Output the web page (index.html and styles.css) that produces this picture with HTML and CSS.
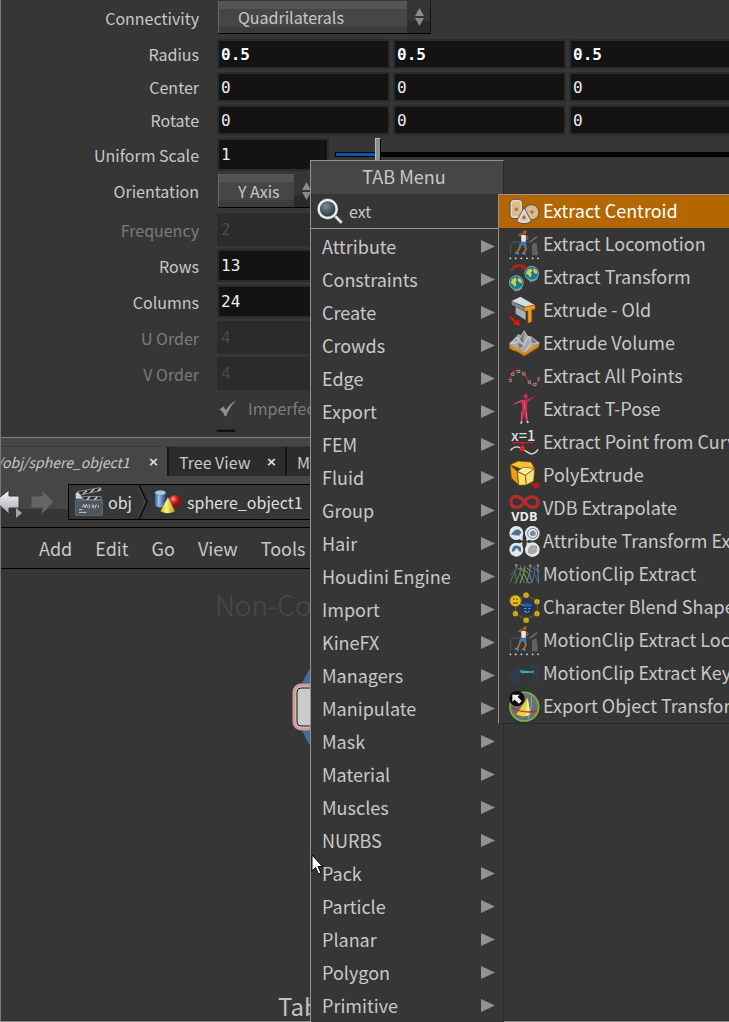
FILE: index.html
```html
<!DOCTYPE html>
<html lang="en">
<head>
<meta charset="utf-8">
<title>sphere_object1</title>
<link rel="stylesheet" href="styles.css">
</head>
<body>
<svg class="defs" aria-hidden="true">
  <defs>
    <linearGradient id="lg-blue" x1="0" x2="1"><stop offset="0" stop-color="#2c5a9c"/><stop offset=".35" stop-color="#9fc0ea"/><stop offset="1" stop-color="#1d3f74"/></linearGradient>
    <linearGradient id="lg-yellow" x1="0" x2="1"><stop offset="0" stop-color="#c9b32a"/><stop offset=".4" stop-color="#fff27a"/><stop offset="1" stop-color="#b8981a"/></linearGradient>
    <radialGradient id="rg-red" cx=".35" cy=".3"><stop offset="0" stop-color="#ff9a8a"/><stop offset=".5" stop-color="#d9302a"/><stop offset="1" stop-color="#8a1210"/></radialGradient>
    <radialGradient id="rg-glass" cx=".4" cy=".35"><stop offset="0" stop-color="#7b8d98"/><stop offset="1" stop-color="#34444e"/></radialGradient>
    <linearGradient id="lg-arrow" x1="0" x2="0" y1="0" y2="1"><stop offset="0" stop-color="#f4f4f4"/><stop offset="1" stop-color="#a9adb0"/></linearGradient>
    <symbol id="i-run" viewBox="0 0 93 93">
      <path d="M5 76V50q1-11 12-11h48" fill="none" stroke="#55585b" stroke-width="3"/>
      <path d="M69 79V48l5-6h9l4 37z" fill="#606366"/>
      <path d="M64 38l20-15" stroke="#74787c" stroke-width="4"/>
      <path d="M42 8l5-5 6 2-1 8-6 4-5-3z" fill="#a85f18"/>
      <path d="M38 22l-8-4 10-6M52 20l5 6-6 7" fill="none" stroke="#a85f18" stroke-width="4"/>
      <path d="M37 17l14 2-1 20-13-1z" fill="#e4e8ee"/>
      <path d="M36 46l-5 12-7 15M46 47l5 12-7 15" fill="none" stroke="#b0681e" stroke-width="6"/>
      <path d="M37 38h13l3 14-6 2-7-6-6 5-5-3z" fill="#3c78be"/>
      <path d="M18 70l11 6M39 72l11 4" stroke="#4d8ddb" stroke-width="5"/>
      <g fill="#e8e8e8"><circle cx="4" cy="88" r="2.6"/><circle cx="20" cy="88" r="2.6"/><circle cx="37" cy="88" r="2.6"/><circle cx="54" cy="88" r="2.6"/><circle cx="71" cy="88" r="2.6"/><circle cx="87" cy="88" r="2.6"/></g>
    </symbol>
    <symbol id="i-globe" viewBox="0 0 42 46">
      <path d="M8 34q10 10 22 0l6-6v8q-8 9-20 8z" fill="#85898c"/>
      <circle cx="20" cy="20" r="19" fill="#177b91" stroke="#a9bfc4" stroke-width="2"/>
      <path d="M8 12l9-6 5 7-4 5 2 6-4 9-5-8-6-4zM25 6l9 6 2 10-8-2-4-6z" fill="#d5cc58"/>
    </symbol>
    <symbol id="i-face" viewBox="0 0 16 16"><circle cx="8" cy="8" r="7" fill="#e3bc24" stroke="#8c7114"/><path d="M5 6h2M9 6h2M5 10q3 2 6 0" stroke="#6c5510" stroke-width="1.5" fill="none"/></symbol>
  </defs>
</svg>

<main class="app">
  <section class="params" aria-label="Parameters">
    <div class="group">
      <div class="row">
        <label class="label" for="conn">Connectivity</label>
        <div class="combo combo-wide">
          <select id="conn"><option>Quadrilaterals</option></select>
          <svg class="spin" viewBox="0 0 9 18"><path d="M4.500 0L9 8H0zM0 10h9l-4.500 8z"/></svg>
        </div>
      </div>
    </div>
    <div class="group">
      <div class="row">
        <label class="label" for="rx">Radius</label>
        <div class="triple strong"><input class="field" id="rx" value="0.5"><input class="field" aria-label="Radius y" value="0.5"><input class="field" aria-label="Radius z" value="0.5"></div>
      </div>
      <div class="row">
        <label class="label" for="cx">Center</label>
        <div class="triple"><input class="field" id="cx" value="0"><input class="field" aria-label="Center y" value="0"><input class="field" aria-label="Center z" value="0"></div>
      </div>
      <div class="row">
        <label class="label" for="rot">Rotate</label>
        <div class="triple"><input class="field" id="rot" value="0"><input class="field" aria-label="Rotate y" value="0"><input class="field" aria-label="Rotate z" value="0"></div>
      </div>
      <div class="row">
        <label class="label" for="scale">Uniform Scale</label>
        <input class="field tall short" id="scale" value="1">
        <input class="slider" type="range" min="0" max="10" value="1" aria-label="Uniform Scale slider">
      </div>
      <div class="row">
        <label class="label" for="orient">Orientation</label>
        <div class="combo">
          <select id="orient"><option>Y Axis</option></select>
          <svg class="spin" viewBox="0 0 9 18"><path d="M4.500 0L9 8H0zM0 10h9l-4.500 8z"/></svg>
        </div>
      </div>
    </div>
    <div class="group">
      <div class="row off"><label class="label" for="freq">Frequency</label><input class="field tall short" id="freq" value="2" disabled></div>
      <div class="row"><label class="label" for="rows">Rows</label><input class="field tall short" id="rows" value="13"></div>
      <div class="row"><label class="label" for="cols">Columns</label><input class="field tall short" id="cols" value="24"></div>
      <div class="row off"><label class="label" for="uo">U Order</label><input class="field tall short" id="uo" value="4" disabled></div>
      <div class="row off"><label class="label" for="vo">V Order</label><input class="field tall short" id="vo" value="4" disabled></div>
      <div class="row off check-row">
        <label class="check"><input type="checkbox" checked disabled>
          <svg viewBox="0 0 52 50"><path d="M1 27l13-8 7 11Q34 8 51 1 30 24 22 49h-4Q12 33 1 27z"/></svg>
          Imperfect</label>
      </div>
    </div>
    <div class="next-box"></div>
  </section>

  <section class="network" aria-label="Network editor">
    <div class="tabs">
      <div class="tab active"><span>/obj/sphere_object1</span><button aria-label="Close">×</button></div>
      <div class="tab"><span>Tree View</span><button aria-label="Close">×</button></div>
      <div class="tab"><span>Material Palette</span></div>
    </div>
    <div class="pathbar">
      <button class="nav" aria-label="Back"><svg viewBox="0 0 22 26"><path d="M-8 12L6 1v6h10v12H6v6z" fill="url(#lg-arrow)" stroke="#2e3940" stroke-width="1"/><path d="M13 19v10l6-5z" fill="#a5a5a5"/></svg></button>
      <button class="nav" aria-label="Forward"><svg viewBox="0 0 26 26"><path d="M1 7h11V1l12 12-12 12v-6H1z" fill="#646464" stroke="#3c474e"/></svg></button>
      <div class="path">
        <a href="#obj">
          <svg class="path-icon" viewBox="0 0 84 90"><path d="M2 39h80v46H2z" fill="#4d565c" stroke="#788086" stroke-width="2"/><path d="M2 18l8-3 14 20H2z" fill="#c9d2d8"/><path d="M8 14L76 2l3 8L16 24zM24 29h54v9H22z" fill="#202326" stroke="#b8bec2" stroke-width="2"/><path d="M24 20l12-9M46 16l12-9M68 12l9-8M36 38l9-9M58 38l9-9" stroke="#cfd4d8" stroke-width="4"/><path d="M12 68h10M12 76h22M22 62l4-10 4 10 4-10 4 10M43 52v12M50 58h8M54 52v12M64 52l-4 12M70 54v8" stroke="#c4cacd" stroke-width="3" fill="none"/></svg>
          obj</a>
        <svg class="sep" viewBox="0 0 10 34"><path d="M1 0l8 17-8 17" fill="none" stroke="#0c0c0c" stroke-width="1.500"/><path d="M-1 0l8 17-8 17" fill="none" stroke="#4c4c4c"/></svg>
        <a href="#sphere">
          <svg class="path-icon" viewBox="0 0 88 78"><path d="M3 9v42q17 11 34 0V9z" fill="url(#lg-blue)"/><ellipse cx="20" cy="10" rx="17" ry="8" fill="#a9c7ee" stroke="#3e69a3"/><circle cx="66" cy="37" r="20" fill="url(#rg-red)"/><path d="M44 24L20 68q24 12 46 0z" fill="url(#lg-yellow)"/></svg>
          sphere_object1</a>
      </div>
    </div>
    <nav class="menubar"><button>Add</button><button>Edit</button><button>Go</button><button>View</button><button>Tools</button></nav>
    <div class="canvas">
      <p class="watermark">Non-Commercial</p>
      <svg class="node" viewBox="0 0 146 136"><circle cx="73" cy="68" r="67" fill="#4a6a9c"/><rect x="2" y="46" width="142" height="44" rx="7" fill="#ccc" stroke="#d09a96" stroke-width="3"/><rect x="5" y="49" width="136" height="38" rx="4" fill="#cbcbcb" stroke="#161616"/></svg>
      <p class="hint">Tab menu</p>
    </div>
  </section>
</main>

<div class="tabmenu" role="menu">
  <h1>TAB Menu</h1>
  <label class="search">
    <svg viewBox="0 0 78 78"><path d="M50 50l24 25" stroke="#8b9196" stroke-width="10"/><path d="M50 50l24 24" stroke="#f0f0f0" stroke-width="6"/><circle cx="32" cy="33" r="27" fill="url(#rg-glass)" stroke="#555c60" stroke-width="10"/><circle cx="32" cy="33" r="27" fill="none" stroke="#eee" stroke-width="7"/></svg>
    <input value="ext" aria-label="Search tools">
  </label>
  <div class="items">
    <button>Attribute</button><button>Constraints</button><button>Create</button><button>Crowds</button><button>Edge</button><button>Export</button><button>FEM</button><button>Fluid</button><button>Group</button><button>Hair</button><button>Houdini Engine</button><button>Import</button><button>KineFX</button><button>Managers</button><button>Manipulate</button><button>Mask</button><button>Material</button><button>Muscles</button><button>NURBS</button><button>Pack</button><button>Particle</button><button>Planar</button><button>Polygon</button><button>Primitive</button>
  </div>
</div>

<div class="submenu" role="menu">
  <button class="selected"><svg viewBox="0 0 93 93"><g stroke="#5b5148" stroke-width="3"><rect x="3" y="10" width="38" height="58" rx="12" fill="#dcd7cc"/><rect x="9" y="17" width="26" height="44" rx="6" fill="#e1b883" stroke="none"/><circle cx="67" cy="49" r="23" fill="#cdb79d"/><circle cx="67" cy="49" r="17" fill="#e2b885" stroke="none"/><path d="M45 34L23 76q22 14 44 0z" fill="#e4dccf"/><path d="M45 48L33 72q12 7 24 0z" fill="#e2bd8d" stroke="none"/></g><g fill="#8c949b" stroke="#5c6064" stroke-width="2"><circle cx="22" cy="40" r="4"/><circle cx="69" cy="48" r="4"/><circle cx="45" cy="64" r="4"/></g></svg>Extract Centroid</button>
  <button><svg viewBox="0 0 93 93"><use href="#i-run"/></svg>Extract Locomotion</button>
  <button><svg viewBox="0 0 93 93"><use href="#i-globe" x="0" y="38" width="46" height="54"/><use href="#i-globe" x="46" y="10" width="46" height="54"/><path d="M6 26Q22 2 44 14" fill="none" stroke="#b52022" stroke-width="7"/><path d="M42 4l12 16-20 4z" fill="#b52022"/></svg>Extract Transform</button>
  <button><svg viewBox="0 0 93 93"><path d="M8 18L34 5l43 25-28 5z" fill="#d9dde0"/><path d="M8 18l40 20v11L8 29z" fill="#7f868c"/><path d="M20 36l30 15v24L20 56z" fill="#a8afb5"/><path d="M47 36l31-6v12l-10 2v36l-11 4V47l-10 2z" fill="#f49a20" stroke="#a86508" stroke-width="2"/><path d="M4 62l20 17 5-8 5 22-23-5 6-4L2 69z" fill="#d11c10"/></svg>Extrude - Old</button>
  <button><svg viewBox="0 0 93 93"><path d="M1 45v15q6 8 20 10l10 5 15 9 15-9 28-17 3-14z" fill="#d98a1c" stroke="#835010" stroke-width="2"/><path d="M1 46l20-18 6-10 9 4 10-14 12 16 9 1 25 20-27 15-18 14-15-10-12-3z" fill="#a6a8aa"/><path d="M46 8L31 34 21 28 6 46l20-2 5-10 13 18L58 24l9 20 22 1M44 52L32 64M67 44L48 72" fill="none" stroke="#d8dadb" stroke-width="3"/><path d="M46 10l-4 36-11-12zM67 28l0 16 16 1zM26 44l6 20 12-12z" fill="#77797c"/></svg>Extrude Volume</button>
  <button><svg viewBox="0 0 93 93"><path d="M3 59C7 20 30 25 45 39S56 76 78 70q8-2 12-16" fill="none" stroke="#c32222" stroke-width="4"/><g fill="#222" stroke="#c9c9c9" stroke-width="2"><path d="M0 55h7v7H0zM8 36h7v7H8zM25 28h7v7h-7zM41 35h7v7h-7zM58 60h7v7h-7zM74 67h7v7h-7zM87 50h7v7h-7z"/></g></svg>Extract All Points</button>
  <button><svg viewBox="0 0 93 93"><path d="M7 32l34-14 6 0 35-11-27 16-1 28 3 31-6 1-6-28-4 29-7-1 5-32-1-26z" fill="#c72c50"/><ellipse cx="50" cy="7" rx="6" ry="8" fill="#b3354d"/><path d="M45 22l3 26M39 52l-1 24M52 54l2 22M16 30l26-12" stroke="#ed7890" stroke-width="2"/><path d="M38 82l-2 7M54 81l4 6" stroke="#e3c8c8" stroke-width="5"/></svg>Extract T-Pose</button>
  <button><svg viewBox="0 0 93 93"><text class="glyph-x1" x="6" y="41">x=1</text><path d="M4 70Q20 52 39 65T66 81q14-1 21-14" fill="none" stroke="#ddd" stroke-width="4"/><path d="M10 47h62M40 47v18" stroke="#d02020" stroke-width="4"/><circle cx="40" cy="65" r="8" fill="#e02424"/></svg>Extract Point from Curve</button>
  <button><svg viewBox="0 0 93 93"><g stroke="#5e4308" stroke-width="2"><path d="M3 14L28 3l38 3 11 19-34 5z" fill="#ffc032"/><path d="M3 14l22 20 4 42L7 54z" fill="#f09c12"/><path d="M25 34l25 12 2 29-23 1z" fill="#ffdf62"/><path d="M25 34l18-12 34 3-27 21z" fill="#fff0a0"/><path d="M50 46l27-21-3 38-22 12z" fill="#ffe07c"/></g><path d="M68 66l13 6 5-8 7 17-21 5 5-7-11-5z" fill="#c51a12"/></svg>PolyExtrude</button>
  <button><svg viewBox="0 0 93 93"><path d="M46 27C36 45 8 51 6 28S30 5 46 26s39 23 41 2S58 6 46 27z" fill="none" stroke="#b62a2a" stroke-width="10"/><text class="glyph-vdb" x="7" y="85">VDB</text></svg>VDB Extrapolate</button>
  <button><svg viewBox="0 0 93 93"><g fill="#e6e7e8"><circle cx="22" cy="21" r="21"/><circle cx="70" cy="22" r="22"/><circle cx="22" cy="71" r="21"/><circle cx="70" cy="71" r="22"/><path d="M26 36l15 9 0-14zM66 38l-14 8 0-16zM26 55l14-7v16zM66 55l-13-7v16z"/></g><path d="M6 26q10-18 24-15l8 8-8 10z" fill="#4479aa"/><circle cx="25" cy="18" r="7" fill="#626b72"/><circle cx="71" cy="22" r="15" fill="none" stroke="#4f83b6" stroke-width="3"/><path d="M63 19l8-6 9 5v10l-10 3-7-4z" fill="#888"/><path d="M8 77l4-15 10-4 13 5 2 14-14-3z" fill="#396f9f"/><path d="M15 75l8-10 8 10z" fill="#ddd"/><path d="M59 66l9-8 16 3-2 17-12 7-12-4z" fill="#a8a9a8" stroke="#77787a"/></svg>Attribute Transform Extract</button>
  <button><svg viewBox="0 0 93 93"><g fill="none" stroke-width="3"><path d="M22 20l-5 19-14 32M17 38l7 32-8 3M21 25l14 8M21 31L3 49" stroke="#5f6e78"/><path d="M35 20l-2 22-13 30M33 42l14 31M27 28l16 10" stroke="#5f8a48"/><path d="M48 20l-4 24-11 29M44 42l13 28 7 3M35 27l22 14" stroke="#72b04c"/><path d="M64 20l-3 22-8 30M61 42l8 30M52 26l19 14" stroke="#72868e"/><path d="M78 20l-2 23-7 29M76 43l12 29M69 25l19 12" stroke="#456b87"/><path d="M87 20v23l2 30M82 28l9 13" stroke="#5484a5"/></g><g fill="#77909c"><circle cx="22" cy="19" r="4"/><circle cx="64" cy="20" r="4"/><circle cx="87" cy="20" r="4"/></g></svg>MotionClip Extract</button>
  <button><svg viewBox="0 0 93 93"><path d="M20 30L52 8l33 20v36L52 84 20 65z" fill="none" stroke="#8f7a24" stroke-width="2"/><circle cx="54" cy="46" r="20" fill="#17366c"/><path d="M39 39q16-12 31 0l-3 5H41z" fill="#285ba8"/><path d="M46 50h6M58 50h6M46 58q9 6 16 0" stroke="#9cb7d6" stroke-width="3"/><path d="M26 32l18 8" stroke="#b4932a" stroke-width="3"/><use href="#i-face" x="0" y="7" width="39" height="39"/><use href="#i-face" x="42" y="0" width="19" height="19"/><use href="#i-face" x="75" y="20" width="18" height="18"/><use href="#i-face" x="75" y="56" width="18" height="18"/><use href="#i-face" x="42" y="75" width="19" height="19"/><use href="#i-face" x="10" y="56" width="18" height="18"/></svg>Character Blend Shapes</button>
  <button><svg viewBox="0 0 93 93"><use href="#i-run"/></svg>MotionClip Extract Locomotion</button>
  <button><svg viewBox="0 0 93 93"><g fill="none" stroke="#24455e" stroke-width="4"><path d="M2 54l14-10 18-13 8 9 22 2 18-4 9-12M34 40L17 53l-2 14 8 11M31 48l-5 24 9 7M76 42l-2 17-6 16M80 44l5 18-2 16M56 23l15 3 18-1M18 48L3 48"/></g><path d="M32 37l36 3 6-4v8l-38 2z" fill="#36a7bc"/></svg>MotionClip Extract Key Poses</button>
  <button><svg viewBox="0 0 93 93"><circle cx="46" cy="47" r="43" fill="#6c6f73" stroke="#74b93c" stroke-width="5"/><path d="M56 20L22 70q18 12 42 1z" fill="#e8cf38"/><path d="M56 20l-6 54q8 0 14-3z" fill="#fff09a"/><path d="M67 13q4 28-10 72" fill="none" stroke="#7aa4c0" stroke-width="3"/><path d="M8 51q40 18 76 9" fill="none" stroke="#c32a22" stroke-width="4"/><circle cx="24" cy="23" r="23" fill="#0c0c0c"/><path d="M10 11h22l-6 6 12 13-8 8-13-12-7 6z" fill="#ededed"/></svg>Export Object Transforms</button>
</div>

<svg class="cursor" viewBox="0 0 12 21"><path d="M1 1v16l3.500-3.500L7.500 20l2.500-1-3-6.500h4.500z" fill="#fff" stroke="#000"/></svg>
</body>
</html>
```
FILE: styles.css
```css
* { box-sizing: border-box; }
html, body { height: 100%; }
body {
  margin: 0;
  overflow: hidden;
  position: relative;
  background: #363636;
  color: #c8c8c8;
  font: 16px/24px "Noto Sans CJK SC", "Noto Sans", sans-serif;
}
button, input, select { font: inherit; color: inherit; border: 0; margin: 0; padding: 0; background: none; min-width: 0; }
button { cursor: default; white-space: nowrap; }
svg { display: block; flex: none; }
p, h1 { margin: 0; font-weight: 400; }
.defs { position: absolute; width: 0; height: 0; }

.app { display: flex; flex-direction: column; height: 100%; border-left: 1px solid #777; border-bottom: 1px solid #8a8a8a; }

/* parameters */
.params { display: flex; flex-direction: column; gap: 5px; padding-top: 1px; flex: none; overflow: hidden; }
.group { display: flex; flex-direction: column; gap: 3px; }
.row { display: flex; align-items: center; }
.label { width: 198px; margin-right: 18px; text-align: right; flex: none; }
.off { color: #7c7c7c; }
.triple { display: grid; grid-template-columns: repeat(3, minmax(173px, 1fr)); gap: 3px; flex: 1; }
.field {
  height: 30px; width: 100%; padding: 0 2px;
  background: #131313; border: 2px solid #2b2b2b; color: #f0f0f0;
  font: 16px/24px "DejaVu Sans Mono", monospace;
}
.tall { height: 33px; }
.short { width: 112px; flex: none; }
.strong .field { font-weight: 700; color: #fff; }
.field:disabled { background: #2b2b2b; color: #4a4a4a; }
.combo {
  display: flex; align-items: center; width: 100px; height: 34px; margin-left: 1px;
  border-bottom: 1px solid #000; border-right: 1px solid #161616;
  background: linear-gradient(#353535 64%, #2a2a2a 64%);
}
.combo-wide { width: 213px; height: 33px; }
.combo select {
  appearance: none; flex: 1; height: 100%; padding: 0 0 0 19px;
  border-left: 1px solid #666;
  background: linear-gradient(#545454 8px, #464646 8px 26px, #3c3c3c 26px);
}
.spin { width: 9px; height: 18px; margin: 0 6px 0 8px; fill: #8a8a8a; }
.slider { appearance: none; flex: 1; height: 33px; margin-left: 6px; }
.slider::-webkit-slider-runnable-track {
  height: 5px; border: 1px solid #000;
  background: linear-gradient(90deg, #0d57ab 10%, #000 10%);
}
.slider::-webkit-slider-thumb {
  appearance: none; width: 6px; height: 33px; margin-top: -15px;
  background: #8f8f8f; border: 1px solid #b8b8b8; border-right-color: #000;
}
.check-row { padding: 3px 0 0 218px; }
.check { display: flex; align-items: center; }
.check input { appearance: none; width: 0; }
.check svg { width: 17px; height: 17px; margin-right: 12px; fill: #909090; }
.next-box { width: 20px; height: 3px; margin: 4px 0 5px 215px; border: 1px solid #2b2b2b; border-bottom: 0; background: #111; }

/* network editor */
.network { flex: 1; min-height: 0; display: flex; flex-direction: column; border-top: 1px solid #808080; background: #464646; }
.tabs { display: flex; height: 30px; margin-top: 8px; border-top: 1px solid #3a3a3a; overflow: hidden; flex: none; }
.tab { display: flex; align-items: center; justify-content: space-between; width: 118px; padding: 0 8px 0 10px; border-left: 2px solid #161616; background: #2c2c2c; white-space: nowrap; flex: none; }
.tab.active { width: 166px; padding-left: 0; border: 0; background: #464646; font-style: italic; font-size: 14px; }
.tab.active span { margin-left: -4px; }
.tab button { font: 700 13px/24px "DejaVu Sans", sans-serif; color: #e0e0e0; }
.pathbar { display: flex; align-items: center; height: 51px; flex: none; background: linear-gradient(#464646 33px, #363636 33px); }
.nav svg { width: 26px; height: 26px; overflow: visible; }
.nav + .nav { margin-left: 3px; }
.path { flex: 1; display: flex; align-items: center; height: 36px; margin-left: 12px; padding-left: 6px; border: 1px solid #000; background: #363636; white-space: nowrap; overflow: hidden; }
.path a { display: flex; align-items: center; gap: 5px; color: #dedede; text-decoration: none; }
.path-icon { width: 28px; height: 30px; }
.sep { width: 10px; height: 34px; margin: 0 6px; }
.menubar { display: flex; gap: 23px; height: 42px; padding-left: 38px; align-items: center; border: 1px solid #000; border-width: 1px 0; background: #363636; font-size: 18px; flex: none; }
.canvas { position: relative; flex: 1; background: #363636; display: flex; flex-direction: column; justify-content: space-between; min-height: 0; }
.watermark { padding: 15px 0 0 214px; font-size: 28px; line-height: 40px; font-weight: 300; color: #494949; }
.hint { padding-left: 277px; font-size: 24px; line-height: 30px; color: #c0c0c0; }
.node { position: absolute; left: 291px; top: 70px; width: 146px; height: 136px; }

/* menus */
.tabmenu { position: absolute; left: 310px; top: 160px; bottom: 0; width: 194px; overflow: hidden; background: #363636; border: 1px solid #929292; border-right-color: #2a2a2a; border-bottom: 0; font-size: 18px; }
.tabmenu h1 { height: 33px; font-size: 18px; line-height: 31px; text-align: center; background: #464646; padding-right: 6px; }
.search { display: flex; align-items: center; height: 35px; gap: 6px; padding-left: 6px; border-bottom: 1px solid #929292; }
.search svg { width: 26px; height: 26px; }
.search input { width: 120px; font-size: 16px; }
.items { display: flex; flex-direction: column; padding-top: 1px; }
.items button { display: flex; align-items: center; justify-content: space-between; height: 33px; flex: none; padding: 0 8px 2px 11px; }
.items button::after { content: ""; width: 14px; height: 13px; margin-top: 2px; background: #929292; clip-path: polygon(0 0, 100% 50%, 0 100%); }
.submenu { position: absolute; left: 498px; right: 0; top: 194px; display: flex; flex-direction: column; overflow: hidden; background: #363636; border: 1px solid #929292; border-right: 0; border-bottom-color: #2a2a2a; font-size: 18px; }
.submenu button { display: flex; align-items: center; gap: 3px; height: 33px; padding: 0 0 4px 10px; flex: none; text-align: left; }
.submenu svg { width: 31px; height: 31px; margin-top: 4px; }
.submenu .selected { background: #b46700; color: #fff; }
.glyph-x1 { font: 500 44px "Noto Sans CJK SC", sans-serif; fill: #ddd; }
.glyph-vdb { font: 700 38px "Open Sans", sans-serif; fill: #ececec; }
.cursor { position: absolute; left: 311px; top: 854px; width: 12px; height: 21px; }
```
